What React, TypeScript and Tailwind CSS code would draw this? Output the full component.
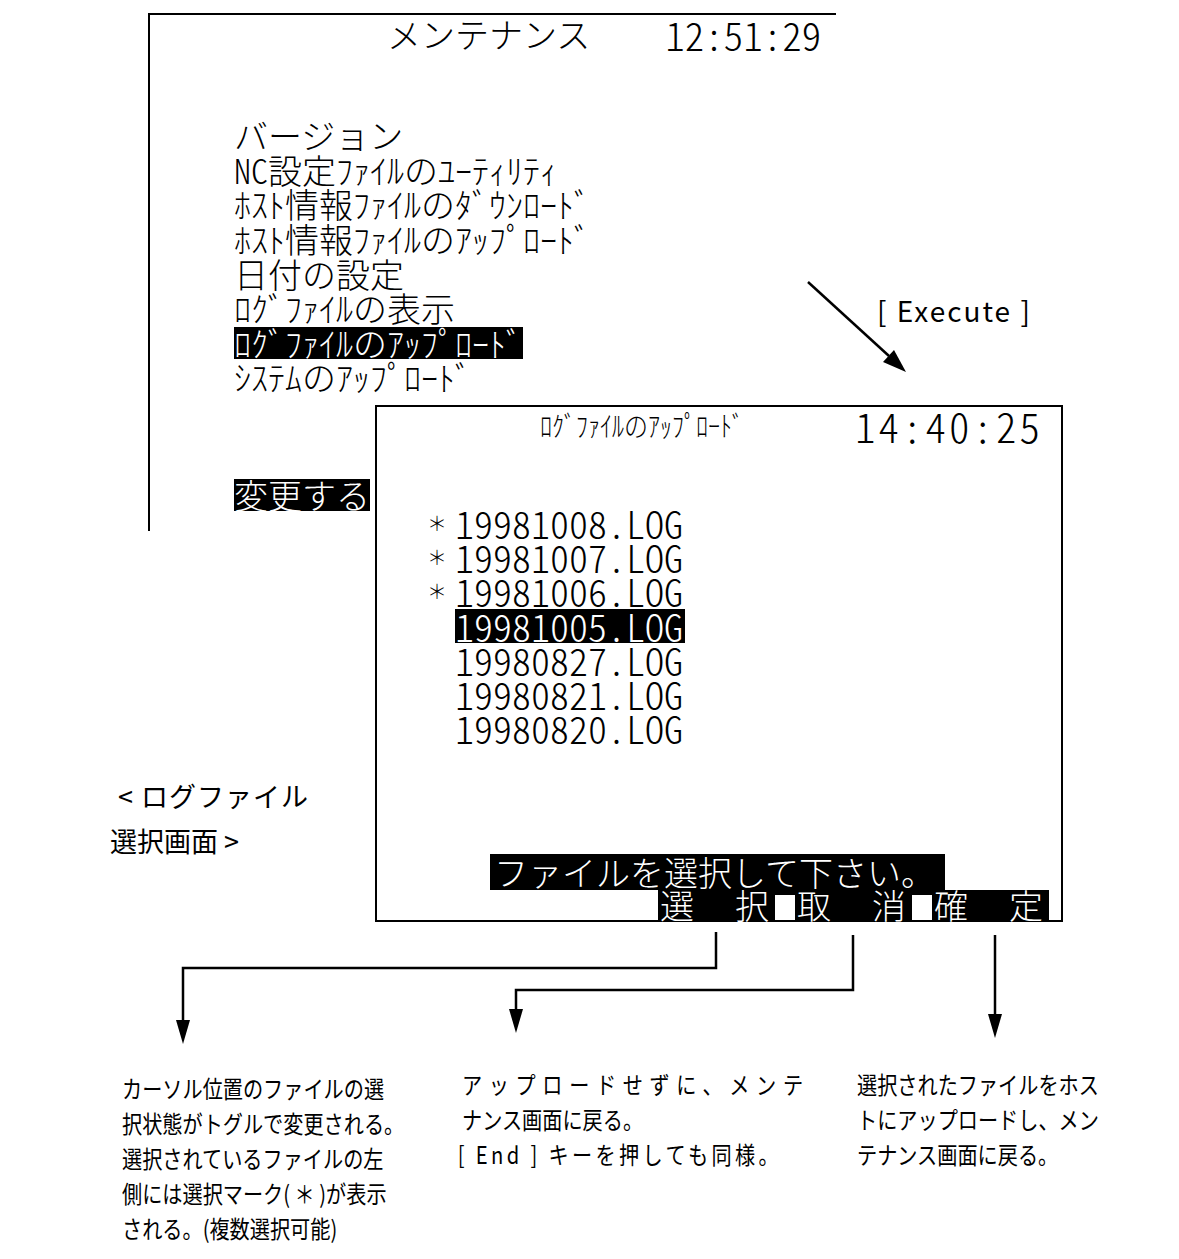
import React from 'react';

const menuItems = [
  'バージョン',
  'NC設定ﾌｧｲﾙのﾕｰﾃｨﾘﾃｨ',
  'ﾎｽﾄ情報ﾌｧｲﾙのﾀﾞｳﾝﾛｰﾄﾞ',
  'ﾎｽﾄ情報ﾌｧｲﾙのｱｯﾌﾟﾛｰﾄﾞ',
  '日付の設定',
  'ﾛｸﾞﾌｧｲﾙの表示',
  'ﾛｸﾞﾌｧｲﾙのｱｯﾌﾟﾛｰﾄﾞ',
  'ｼｽﾃﾑのｱｯﾌﾟﾛｰﾄﾞ',
];

const logFiles = [
  { name: '19981008.LOG', marked: true },
  { name: '19981007.LOG', marked: true },
  { name: '19981006.LOG', marked: true },
  { name: '19981005.LOG', marked: false, cursor: true },
  { name: '19980827.LOG', marked: false },
  { name: '19980821.LOG', marked: false },
  { name: '19980820.LOG', marked: false },
];

const softKeys = [
  ['選', '択'],
  ['取', '消'],
  ['確', '定'],
];

const Arrows = () => (
  <svg
    className="absolute inset-0 pointer-events-none"
    width="1179"
    height="1259"
    viewBox="0 0 1179 1259"
  >
    {/* Execute */}
    <line x1="808" y1="282" x2="889" y2="356" stroke="black" strokeWidth="2.5" />
    <polygon points="906,372 883,362 894,350" fill="black" />

    {/* 選択 */}
    <polyline
      points="716,932 716,968 183,968 183,1022"
      fill="none"
      stroke="black"
      strokeWidth="2.5"
      strokeLinejoin="miter"
    />
    <polygon points="176,1020 190,1020 183,1044" fill="black" />

    {/* 取消 */}
    <polyline
      points="853,935 853,990 516,990 516,1011"
      fill="none"
      stroke="black"
      strokeWidth="2.5"
      strokeLinejoin="miter"
    />
    <polygon points="509,1009 523,1009 516,1033" fill="black" />

    {/* 確定 */}
    <line x1="995" y1="935" x2="995" y2="1016" stroke="black" strokeWidth="2.5" />
    <polygon points="988,1014 1002,1014 995,1038" fill="black" />
  </svg>
);

const MaintenanceScreen = () => (
  <div className="absolute left-[148px] top-[13px] w-[688px] h-[518px] border-t-2 border-l-2 border-black whitespace-nowrap [font-family:'Noto_Sans_CJK_JP',sans-serif] [font-feature-settings:'hwid'] font-extralight">
    <div className="flex items-center h-[38px]">
      <span className="ml-[237px] text-[34px] leading-[38px]">メンテナンス</span>
      <span className="ml-[75px] text-[39px] leading-[38px]">12:51:29</span>
    </div>
    <ul className="mt-[65px] ml-[84px] flex flex-col">
      {menuItems.map((item, i) => (
        <li key={i} className="h-[34.6px] flex items-center text-[34px]">
          <span
            className={
              'inline-block h-[32px] leading-[32px] ' + (i === 6 ? 'bg-black text-white' : '')
            }
          >
            {item}
          </span>
        </li>
      ))}
    </ul>
    <div className="mt-[74px] ml-[84px] h-[32px] text-[34px]">
      <span className="inline-block h-[32px] leading-[32px] bg-black text-white">変更する</span>
    </div>
  </div>
);

const LogUploadScreen = () => (
  <div className="absolute left-[375px] top-[405px] w-[688px] h-[517px] border-2 border-black bg-white flex flex-col whitespace-nowrap [font-family:'Noto_Sans_CJK_JP',sans-serif] [font-feature-settings:'hwid'] font-extralight">
    <div className="flex items-center h-[36px]">
      <span className="ml-[163px] inline-block scale-y-[1.2] text-[24px] leading-[36px]">
        ﾛｸﾞﾌｧｲﾙのｱｯﾌﾟﾛｰﾄﾞ
      </span>
      <span className="ml-[111px] text-[41px] leading-[36px] tracking-[3px]">14:40:25</span>
    </div>
    <ul className="mt-[63px] flex flex-col">
      {logFiles.map((f) => (
        <li key={f.name} className="flex items-center h-[34.2px]">
          <span className="ml-[50px] w-[28px] text-[20px] leading-[34px] [font-feature-settings:normal]">
            {f.marked ? '＊' : ''}
          </span>
          <span
            className={
              'inline-block h-[34px] leading-[34px] text-[38px] pr-[2px] ' +
              (f.cursor ? 'bg-black text-white' : '')
            }
          >
            {f.name}
          </span>
        </li>
      ))}
    </ul>
    <div className="mt-auto flex flex-col">
      <div className="ml-[113px] w-[455px] h-[36px] leading-[36px] text-[34px] pl-[4px] bg-black text-white">
        ファイルを選択して下さい。
      </div>
      <div className="ml-[281px] flex h-[30px] text-[34px] leading-[30px] text-white">
        {softKeys.map(([a, b], i) => (
          <React.Fragment key={a}>
            {i > 0 && (
              <span className="w-[20px] bg-black pt-[5px]">
                <span className="block h-full bg-white" />
              </span>
            )}
            <span className="w-[117px] bg-black flex pl-[2px]">
              <span className="w-[75px]">{a}</span>
              <span>{b}</span>
            </span>
          </React.Fragment>
        ))}
      </div>
    </div>
  </div>
);

export default function App() {
  return (
    <div className="relative w-[1179px] h-[1259px] bg-white text-black overflow-hidden">
      <MaintenanceScreen />
      <LogUploadScreen />

      <div className="absolute left-[877px] top-[292px] text-[28px] leading-[36px] tracking-[2px] whitespace-nowrap [font-family:'Noto_Sans_CJK_JP',sans-serif]">
        [ Execute ]
      </div>

      <div className="absolute left-[110px] top-[773px] text-[27px] leading-[45px] whitespace-nowrap [font-family:'Noto_Sans_CJK_JP',sans-serif]">
        <div className="pl-[8px] tracking-[1px]">&lt; ログファイル</div>
        <div>選択画面 &gt;</div>
      </div>

      <Arrows />

      <div className="absolute left-[122px] top-[1070px] origin-top-left scale-x-[0.84] text-[24px] leading-[35px] whitespace-nowrap [font-family:'Noto_Sans_CJK_JP',sans-serif]">
        <div>カーソル位置のファイルの選</div>
        <div>択状態がトグルで変更される。</div>
        <div>選択されているファイルの左</div>
        <div>側には選択マーク( ＊ )が表示</div>
        <div>される。(複数選択可能)</div>
      </div>

      <div className="absolute left-[462px] top-[1066px] origin-top-left scale-x-[0.84] text-[24px] leading-[35px] whitespace-nowrap [font-family:'Noto_Sans_CJK_JP',sans-serif]">
        <div className="w-[406px] [text-align-last:justify]">アップロードせずに、メンテ</div>
        <div>ナンス画面に戻る。</div>
        <div className="-ml-[5px] tracking-[4px]">[ End ] キーを押しても同様。</div>
      </div>

      <div className="absolute left-[857px] top-[1066px] origin-top-left scale-x-[0.84] text-[24px] leading-[35px] whitespace-nowrap [font-family:'Noto_Sans_CJK_JP',sans-serif]">
        <div>選択されたファイルをホス</div>
        <div>トにアップロードし、メン</div>
        <div>テナンス画面に戻る。</div>
      </div>
    </div>
  );
}
